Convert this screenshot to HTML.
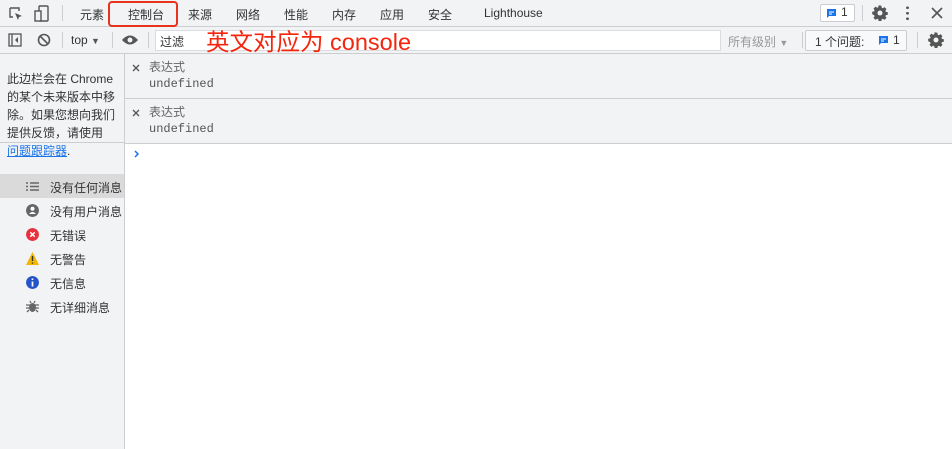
<!DOCTYPE html>
<html><head><meta charset="utf-8"><style>
*{margin:0;padding:0;box-sizing:border-box}
body{width:952px;height:449px;overflow:hidden;background:#fff;font-family:"Liberation Sans","Noto Sans CJK SC",sans-serif;font-size:12px;color:#333;position:relative}
.abs{position:absolute}
#tabs{left:0;top:0;width:952px;height:27px;background:#f1f3f4;border-bottom:1px solid #cbcdd1}
#tb{left:0;top:27px;width:952px;height:27px;background:#f1f3f4;border-bottom:1px solid #cbcdd1}
.tab{position:absolute;top:6px;font-size:12px;color:#333}
.sep{position:absolute;width:1px;background:#cbcdd1}
#side{left:0;top:54px;width:125px;height:395px;background:#f1f3f4;border-right:1px solid #cbcdd1}
.row{position:absolute;left:125px;width:827px;height:45px;background:#f1f3f4;border-bottom:1px solid #cbcdd1}
.mono{font-family:"Liberation Mono",monospace;color:#555}
.it{position:absolute;left:0;width:124px;height:24px;font-size:12px;color:#333}
.it span{position:absolute;left:50px;top:5px}
.ic{position:absolute;left:26px;top:6px;width:13px;height:13px;border-radius:50%}
</style></head><body>
<svg width="0" height="0" style="position:absolute"><defs><g id="gear"><path d="M8 0.5l1.4.3.3 1.9 1.2.5 1.6-1.1 2 2-1.1 1.6.5 1.2 1.9.3v2.6l-1.9.3-.5 1.2 1.1 1.6-2 2-1.6-1.1-1.2.5-.3 1.9H6.6l-.3-1.9-1.2-.5-1.6 1.1-2-2 1.1-1.6-.5-1.2L.2 9.3V6.7l1.9-.3.5-1.2-1.1-1.6 2-2 1.6 1.1 1.2-.5.3-1.9z" fill="#555"/><circle cx="8" cy="8" r="2.5" fill="#f1f3f4"/></g></defs></svg>
<div id="tabs" class="abs">
<svg class="abs" style="left:8px;top:6px" width="16" height="16" viewBox="0 0 16 16"><path d="M2 2h9v3M2 2v9h3" fill="none" stroke="#555" stroke-width="1.4"/><path d="M7 7l7 3-3 1-1 3z" fill="#555"/></svg>
<svg class="abs" style="left:34px;top:5px" width="16" height="17" viewBox="0 0 16 17"><rect x="5" y="1" width="9" height="15" rx="1" fill="none" stroke="#555" stroke-width="1.4"/><rect x="1" y="6" width="6" height="10" fill="#f1f3f4" stroke="#555" stroke-width="1.4"/></svg>
<div class="sep" style="left:62px;top:5px;height:16px"></div>
<div class="tab" style="left:80px">元素</div>
<div class="tab" style="left:128px">控制台</div>
<div class="abs" style="left:108px;top:1px;width:70px;height:26px;border:2px solid #e8321e;border-radius:4px"></div>
<div class="tab" style="left:188px">来源</div>
<div class="tab" style="left:236px">网络</div>
<div class="tab" style="left:284px">性能</div>
<div class="tab" style="left:332px">内存</div>
<div class="tab" style="left:380px">应用</div>
<div class="tab" style="left:428px">安全</div>
<div class="tab" style="left:484px">Lighthouse</div>
<div class="abs" style="left:820px;top:4px;width:35px;height:18px;border:1px solid #cbcdd1;border-radius:2px;background:#fff"></div>
<svg class="abs" style="left:826px;top:8px" width="11" height="11" viewBox="0 0 11 11"><path d="M1 1h9v7H3l-2 2z" fill="#1a73e8"/><path d="M3 4h5M3 6h3" stroke="#fff"/></svg>
<div class="tab" style="left:841px;top:5px">1</div>
<div class="sep" style="left:862px;top:5px;height:16px"></div>
<svg class="abs" style="left:872px;top:5px" width="16" height="16" viewBox="0 0 16 16"><use href="#gear"/></svg>
<div class="abs" style="left:906px;top:5px;width:3px;height:16px;background:radial-gradient(circle,#555 1.3px,transparent 1.5px) 0 0/3px 5.5px"></div>
<svg class="abs" style="left:931px;top:7px" width="12" height="12" viewBox="0 0 12 12"><path d="M1 1l10 10M11 1L1 11" stroke="#555" stroke-width="1.6"/></svg>
</div>
<div id="tb" class="abs">
<svg class="abs" style="left:8px;top:6px" width="14" height="14" viewBox="0 0 14 14"><rect x="1" y="1" width="12" height="12" fill="none" stroke="#555" stroke-width="1.3"/><path d="M4 1v12" stroke="#555" stroke-width="1.3"/><path d="M10 4v6L7 7z" fill="#555"/></svg>
<svg class="abs" style="left:37px;top:6px" width="14" height="14" viewBox="0 0 14 14"><circle cx="7" cy="7" r="5.5" fill="none" stroke="#555" stroke-width="1.6"/><path d="M3 3l8 8" stroke="#555" stroke-width="1.6"/></svg>
<div class="sep" style="left:62px;top:5px;height:16px"></div>
<div class="abs" style="left:71px;top:6px;color:#333">top <span style="font-size:9px;color:#555">▼</span></div>
<div class="sep" style="left:112px;top:5px;height:16px"></div>
<svg class="abs" style="left:121px;top:7px" width="18" height="12" viewBox="0 0 18 12"><path d="M1 6Q9-3 17 6Q9 15 1 6z" fill="#555"/><circle cx="9" cy="6" r="2.5" fill="#f1f3f4"/></svg>
<div class="sep" style="left:148px;top:5px;height:16px"></div>
<div class="abs" style="left:155px;top:3px;width:566px;height:21px;background:#fff;border:1px solid #dadce0"></div>
<div class="abs" style="left:160px;top:6px;color:#333">过滤</div>
<div class="abs" style="left:206px;top:-4px;font-size:23.5px;color:#f4250c;white-space:nowrap">英文对应为 console</div>
<div class="abs" style="left:728px;top:6px;color:#999">所有级别 <span style="font-size:9px">▼</span></div>
<div class="sep" style="left:802px;top:5px;height:16px"></div>
<div class="abs" style="left:805px;top:3px;width:102px;height:21px;border:1px solid #cbcdd1;border-radius:2px;background:#f8f9fa"></div>
<div class="abs" style="left:815px;top:6px;color:#333">1 个问题:</div>
<svg class="abs" style="left:878px;top:8px" width="11" height="11" viewBox="0 0 11 11"><path d="M1 1h9v7H3l-2 2z" fill="#1a73e8"/><path d="M3 4h5M3 6h3" stroke="#fff"/></svg>
<div class="abs" style="left:893px;top:6px">1</div>
<div class="sep" style="left:917px;top:5px;height:16px"></div>
<svg class="abs" style="left:928px;top:5px" width="16" height="16" viewBox="0 0 16 16"><use href="#gear"/></svg>
</div>
<div id="side" class="abs">
<div class="abs" style="left:7px;top:16px;width:120px;line-height:18px;font-size:12px;color:#333;white-space:nowrap">此边栏会在 Chrome<br>的某个未来版本中移<br>除。如果您想向我们<br>提供反馈，请使用<br><span style="color:#1a73e8;text-decoration:underline">问题跟踪器</span>.</div>
<div class="abs" style="left:0;top:88px;width:124px;height:1px;background:#cbcdd1"></div>
<div class="it" style="top:120px;background:#dadada"><svg class="ic" style="border-radius:0" viewBox="0 0 13 13"><path d="M0 3h2M4 3h9M0 6.5h2M4 6.5h9M0 10h2M4 10h9" stroke="#666" stroke-width="1.4"/></svg><span>没有任何消息</span></div>
<div class="it" style="top:144px"><svg class="ic" viewBox="0 0 13 13"><circle cx="6.5" cy="6.5" r="6.5" fill="#666"/><circle cx="6.5" cy="4.8" r="2" fill="#fff"/><path d="M3 10q3.5-4 7 0" fill="#fff"/></svg><span>没有用户消息</span></div>
<div class="it" style="top:168px"><svg class="ic" viewBox="0 0 13 13"><circle cx="6.5" cy="6.5" r="6.5" fill="#e8313e"/><path d="M4.3 4.3l4.4 4.4M8.7 4.3l-4.4 4.4" stroke="#fff" stroke-width="1.5"/></svg><span>无错误</span></div>
<div class="it" style="top:192px"><svg class="ic" style="border-radius:0" viewBox="0 0 13 13"><path d="M6.5 0L13 13H0z" fill="#f2b705"/><path d="M6.5 4v5M6.5 10.5v1.3" stroke="#333" stroke-width="1.4"/></svg><span>无警告</span></div>
<div class="it" style="top:216px"><svg class="ic" viewBox="0 0 13 13"><circle cx="6.5" cy="6.5" r="6.5" fill="#2454c8"/><path d="M6.5 5.5v5M6.5 2.5v1.5" stroke="#fff" stroke-width="1.7"/></svg><span>无信息</span></div>
<div class="it" style="top:240px"><svg class="ic" style="border-radius:0" viewBox="0 0 13 13"><ellipse cx="6.5" cy="7.5" rx="3.5" ry="4.5" fill="#666"/><path d="M0 5h13M0 8h13M1 12l2-2M12 12l-2-2M4 1l1 2M9 1l-1 2" stroke="#666" stroke-width="1.3"/></svg><span>无详细消息</span></div>
</div>
<div class="row" style="top:54px"><svg class="abs" style="left:7px;top:10px" width="8" height="8" viewBox="0 0 8 8"><path d="M1 1l6 6M7 1L1 7" stroke="#555" stroke-width="1.3"/></svg><div class="abs" style="left:24px;top:4px;color:#666">表达式</div><div class="abs mono" style="left:24px;top:23px">undefined</div></div>
<div class="row" style="top:99px"><svg class="abs" style="left:7px;top:10px" width="8" height="8" viewBox="0 0 8 8"><path d="M1 1l6 6M7 1L1 7" stroke="#555" stroke-width="1.3"/></svg><div class="abs" style="left:24px;top:4px;color:#666">表达式</div><div class="abs mono" style="left:24px;top:23px">undefined</div></div>
<svg class="abs" style="left:133px;top:149px" width="8" height="10" viewBox="0 0 8 10"><path d="M2 2l3 3-3 3" fill="none" stroke="#1a73e8" stroke-width="1.5"/></svg>
</body></html>
